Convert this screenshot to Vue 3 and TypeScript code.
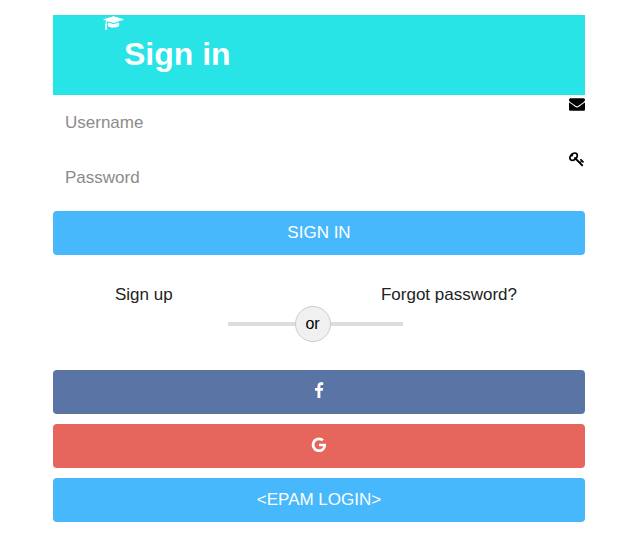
<script setup lang="ts">
import { ref } from 'vue'

const username = ref('')
const password = ref('')
</script>

<template>
  <form class="login" @submit.prevent>
    <header class="banner">
      <svg class="cap" viewBox="0 0 2304 1792" aria-hidden="true">
        <path d="M1774 836l18 316q4 69-82 128t-235 93.500-323 34.500-323-34.500-235-93.500-82-128l18-316 574 181q22 7 48 7t48-7zM2304 512q0 23-22 31l-1120 352q-4 1-10 1t-10-1l-652-206q-43 34-71 111.500t-34 178.500q63 36 63 109 0 69-58 107l58 433q2 14-8 25-9 11-24 11h-192q-15 0-24-11-10-11-8-25l58-433q-58-38-58-107 0-73 65-111 11-207 98-330l-333-104q-22-8-22-31t22-31l1120-352q4-1 10-1t10 1l1120 352q22 8 22 31z" />
      </svg>
      <h1>Sign in</h1>
    </header>

    <label class="field">
      <input v-model="username" type="text" placeholder="Username" />
      <svg class="mark" viewBox="0 0 1792 1792" aria-hidden="true">
        <path d="M1792 710v794q0 66-47 113t-113 47h-1472q-66 0-113-47t-47-113v-794q44 49 101 87 362 246 497 345 57 42 92.500 65.500t94.500 48 110 24.500h2q51 0 110-24.500t94.500-48 92.500-65.500q170-123 498-345 57-39 100-87zM1792 416q0 79-49 151t-122 123q-376 261-468 325-10 7-42.500 31t-54 38.500-52 32.500-57.500 27-50 9h-2q-23 0-50-9t-57.500-27-52-32.500-54-38.500-42.500-31q-91-64-262-182.500t-205-142.500q-62-42-117-115.500t-55-136.500q0-78 41.500-130t118.500-52h1472q65 0 112.500 47t47.500 113z" />
      </svg>
    </label>
    <label class="field">
      <input v-model="password" type="password" placeholder="Password" />
      <svg class="mark" viewBox="0 0 1792 1792" aria-hidden="true">
        <path d="M832 512q0-80-56-136t-136-56-136 56-56 136q0 42 19 83-41-19-83-19-80 0-136 56t-56 136 56 136 136 56 136-56 56-136q0-42-19-83 41 19 83 19 80 0 136-56t56-136zm851 704q0 17-49 66t-66 49q-9 0-28.500-16t-36.500-33-38.500-40-24.500-26l-96 96 220 220q28 28 28 68 0 42-39 81t-81 39q-40 0-68-28l-671-671q-176 131-365 131-163 0-265.500-102.500t-102.500-265.500q0-160 95-313t248-248 313-95q163 0 265.500 102.500t102.500 265.500q0 189-131 365l355 355 96-96q-3-3-26-24.500t-40-38.500-33-36.500-16-28.500q0-17 49-66t66-49q13 0 23 10 6 6 46 44.500t82 79.500 86.500 86 73 78 28.500 41z" />
      </svg>
    </label>

    <button class="btn" type="submit">SIGN IN</button>

    <nav class="links">
      <a>Sign up</a>
      <a>Forgot password?</a>
    </nav>

    <div class="divider">
      <span class="line left"></span>
      <span class="or">or</span>
      <span class="line right"></span>
    </div>

    <div class="social">
      <button class="btn facebook" type="button" aria-label="Facebook">
        <svg viewBox="-53 -27 1897 1897"><path d="M1343 12v264h-157q-86 0-116 36t-30 108v189h293l-39 296h-254v759h-306v-759h-255v-296h255v-218q0-186 104-288.500t277-102.500q147 0 228 12z" /></svg>
      </button>
      <button class="btn google" type="button" aria-label="Google">
        <svg viewBox="-53 -27 1897 1897"><path d="M896 786h725q12 67 12 128 0 217-91 387.500t-259.500 266.500-386.500 96q-157 0-299-60.500t-245-163.500-163.500-245-60.500-299 60.500-299 163.500-245 245-163.500 299-60.500q300 0 515 201l-209 201q-123-119-306-119-129 0-238.500 65t-173.500 176.500-64 243.500 64 243.500 173.500 176.500 238.500 65q87 0 160-24t120-60 82-82 51.500-87 22.500-78h-436v-264z" /></svg>
      </button>
      <button class="btn" type="button">&lt;EPAM LOGIN&gt;</button>
    </div>
  </form>
</template>

<style>
body {
  background: #fff;
}
</style>

<style scoped>
.login {
  width: 532px;
  margin: 0 auto;
  padding-top: 15px;
  font-family: "Liberation Sans", Arial, sans-serif;
  font-size: 17px;
  color: #222;
}
.banner {
  display: flex;
  align-items: flex-start;
  height: 80px;
  padding-left: 50px;
  box-sizing: border-box;
  background: #28e4e7;
  color: #fff;
}
.cap {
  width: 21px;
  height: 16px;
  fill: #fff;
}
h1 {
  margin: 0;
  font-size: 32px;
  line-height: 78px;
}
.field {
  display: flex;
  height: 55px;
}
.field input {
  flex: 1;
  min-width: 0;
  padding: 0 12px;
  border: 0;
  outline: 0;
  background: transparent;
  font: inherit;
}
.field input::placeholder {
  color: #8b8b8b;
  opacity: 1;
}
.mark {
  width: 16px;
  height: 16px;
  margin-top: 1px;
  fill: #000;
}
.btn {
  display: flex;
  align-items: center;
  justify-content: center;
  width: 100%;
  height: 44px;
  padding: 0;
  border: 0;
  border-radius: 4px;
  background: #47b8fc;
  color: #fff;
  font: inherit;
}
.field + .btn {
  margin-top: 6px;
}
.btn svg {
  width: 18px;
  height: 18px;
  margin-bottom: 2px;
  fill: #fff;
}
.facebook {
  background: #5a74a5;
}
.google {
  background: #e6665d;
}
.links {
  display: flex;
  justify-content: space-between;
  margin-top: 30px;
  padding: 0 68px 0 62px;
  line-height: 20px;
}
.divider {
  display: flex;
  align-items: center;
  height: 36px;
  margin-top: 1px;
  padding-left: 174.5px;
}
.line {
  height: 4px;
  background: #ddd;
}
.left {
  width: 67.1px;
}
.right {
  width: 72px;
}
.or {
  width: 36px;
  height: 36px;
  box-sizing: border-box;
  border: 1px solid #ccc;
  border-radius: 50%;
  background: #f0f0f0;
  color: #000;
  font-size: 16px;
  line-height: 34px;
  text-align: center;
}
.social {
  display: grid;
  gap: 10px;
  margin-top: 28px;
}
</style>
